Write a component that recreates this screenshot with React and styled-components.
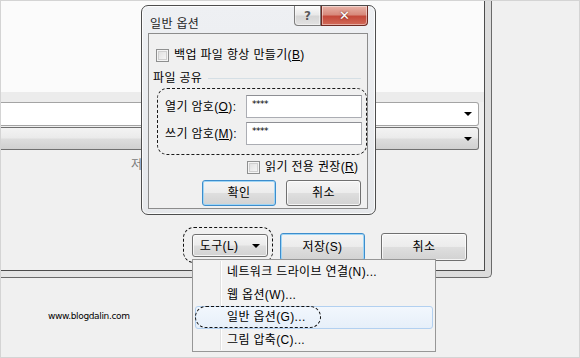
import React from 'react';
import styled, { createGlobalStyle } from 'styled-components';

const GlobalStyle = createGlobalStyle`
  html, body {
    margin: 0;
    padding: 0;
    background: #f0f0f0;
  }
  body {
    font-family: "Liberation Sans", "Noto Sans CJK KR", sans-serif;
    font-size: 12px;
    letter-spacing: 0.35px;
    color: #000;
  }
`;

const Screen = styled.div`
  position: relative;
  width: 580px;
  height: 358px;
  box-sizing: border-box;
  border: 1px solid #d4d4d4;
  background: #f0f0f0;
  overflow: hidden;
`;

/* background "save as" window */
const WindowFrame = styled.div`
  box-sizing: border-box;
  width: 491px;
  height: 277px;
  padding: 0 6px 6px 0;
  background: linear-gradient(90deg, #e6e6e6, #dcdcdc);
  border-right: 1px solid #6a6a6a;
  border-bottom: 1px solid #6a6a6a;
  border-bottom-right-radius: 5px;
`;

const WindowBody = styled.div`
  box-sizing: border-box;
  height: 270px;
  display: flex;
  flex-direction: column;
  background: #f0f0f0;
  border-right: 1px solid #4c4c4c;
  border-bottom: 1px solid #4c4c4c;
`;

const FileList = styled.div`
  height: 91px;
  background: #fbfbfb;
`;

const Strip = styled.div`
  height: 10px;
  background: #ececec;
`;

const Field = styled.div`
  box-sizing: border-box;
  height: ${p => p.$h}px;
  margin: ${p => p.$mt || 0}px 5px 0 0;
  display: flex;
  align-items: center;
  justify-content: flex-end;
  padding-right: 6px;
  border: 1px solid ${p => (p.$combo ? '#707070' : '#a4a4a4')};
  border-left: none;
  border-radius: 0 3px 3px 0;
  background: ${p => (p.$combo ? 'linear-gradient(#f3f3f3, #ebebeb 45%, #dcdcdc 55%, #d0d0d0)' : '#ffffff')};
`;

const DropArrow = styled.span`
  width: 0;
  height: 0;
  border-left: 4px solid transparent;
  border-right: 4px solid transparent;
  border-top: 4px solid #000;
`;

const MiddleArea = styled.div`
  height: 77px;
  box-sizing: border-box;
  padding: 7px 0 0 130px;
  color: #7a7a7a;
  line-height: 16px;
  white-space: nowrap;
`;

const ButtonBar = styled.div`
  display: flex;
  justify-content: flex-end;
  align-items: flex-start;
  padding-right: 17px;
`;

const FocusRing = styled.div`
  box-sizing: border-box;
  display: flex;
  padding: 6px 4px 0 8px;
  height: 36px;
  border: 1px dashed #111;
  border-radius: 11px;
  margin-right: 7px;
`;

const WinButton = styled.div`
  box-sizing: border-box;
  width: ${p => p.$w}px;
  height: ${p => p.$h}px;
  margin-top: ${p => p.$mt || 0}px;
  margin-left: ${p => p.$ml || 0}px;
  display: flex;
  align-items: center;
  justify-content: center;
  gap: 14px;
  border: 1px solid ${p => (p.$default ? '#3d8dcc' : '#707070')};
  border-radius: 3px;
  background: linear-gradient(#f4f4f4, #ececec 48%, #dedede 52%, #d2d2d2);
  box-shadow: inset 0 0 0 1px ${p => (p.$default ? '#9fd5f5' : 'rgba(255,255,255,0.75)')};
  line-height: 14px;
  color: #000;
  white-space: nowrap;
`;

const Watermark = styled.div`
  padding: 33px 0 0 47px;
  font-family: "DejaVu Sans", sans-serif;
  font-size: 9px;
  letter-spacing: -0.35px;
  color: #000;
  -webkit-font-smoothing: none;
`;

/* "일반 옵션" dialog */
const Dialog = styled.div`
  position: absolute;
  left: 140px;
  top: 4px;
  width: 235px;
  height: 210px;
  box-sizing: border-box;
  display: flex;
  flex-direction: column;
  background: linear-gradient(#eef0f3, #e6e8eb);
  border: 1px solid #4d4d4d;
  border-radius: 7px;
  box-shadow: inset 0 0 0 1px rgba(255,255,255,0.8);
`;

const TitleBar = styled.div`
  height: 27px;
  display: flex;
  align-items: flex-start;
  padding: 0 7px 0 8px;
`;

const Title = styled.div`
  flex: 1;
  padding-top: 11px;
  line-height: 14px;
  color: #1e1e1e;
`;

const CaptionButton = styled.div`
  box-sizing: border-box;
  width: ${p => p.$w}px;
  height: 20px;
  display: flex;
  align-items: center;
  justify-content: center;
  border: 1px solid ${p => (p.$close ? '#6f2a22' : '#7d7d7d')};
  border-top: none;
  border-radius: ${p => (p.$close ? '0 0 4px 0' : '0 0 0 4px')};
  background: ${p => (p.$close
    ? 'linear-gradient(#e8b3a8, #d88a7c 45%, #c4493a 55%, #d26a58)'
    : 'linear-gradient(#fbfbfb, #e9e9e9 45%, #d6d6d6 55%, #e2e2e2)')};
  box-shadow: inset 0 0 0 1px rgba(255,255,255,0.45);
  color: ${p => (p.$close ? '#fff' : '#5a5a5a')};
  font-family: "DejaVu Sans", sans-serif;
  font-weight: bold;
  font-size: ${p => (p.$close ? 13 : 12)}px;
  letter-spacing: 0;
  text-shadow: ${p => (p.$close ? '0 0 2px #5a1d16' : '0 0 1px #fff')};
`;

const Panel = styled.div`
  box-sizing: border-box;
  flex: 1;
  margin: 0 7px 5px 6px;
  padding: 14px 6px 0 7px;
  background: #f0f0f0;
  border: 1px solid #8c8c8c;
  display: flex;
  flex-direction: column;
`;

const CheckRow = styled.label`
  display: flex;
  align-items: center;
  gap: 5px;
  line-height: 14px;
  margin-left: ${p => p.$ml || 0}px;
  margin-top: ${p => p.$mt || 0}px;
  white-space: nowrap;
`;

const CheckBox = styled.span`
  box-sizing: border-box;
  width: 13px;
  height: 13px;
  border: 1px solid #8e8f8f;
  background: linear-gradient(135deg, #dcdcdc, #fafafa);
  box-shadow: inset 0 0 0 1px #f4f4f4, inset 0 0 0 2px #cfcfcf;
`;

const GroupTitle = styled.div`
  display: flex;
  align-items: center;
  gap: 6px;
  margin-top: 9px;
  margin-left: -3px;
  line-height: 14px;
  &::after {
    content: "";
    flex: 1;
    height: 1px;
    background: #d5dfe5;
  }
`;

const ShareBox = styled.div`
  box-sizing: border-box;
  width: 210px;
  height: 67px;
  margin-top: 3px;
  margin-left: 1px;
  padding: 6px 4px 0 7px;
  border: 1px dashed #1a1a1a;
  border-radius: 10px;
  display: flex;
  flex-direction: column;
  gap: 4px;
`;

const FieldRow = styled.div`
  display: flex;
  align-items: center;
  justify-content: space-between;
`;

const FieldLabel = styled.span`
  line-height: 14px;
  white-space: nowrap;
`;

const PasswordBox = styled.div`
  box-sizing: border-box;
  width: 116px;
  height: 23px;
  padding: 2px 0 0 5px;
  background: #fff;
  border: 1px solid #abadb3;
  border-top-color: #8e8f94;
  font-family: "DejaVu Sans", sans-serif;
  font-size: 9px;
  line-height: 12px;
  letter-spacing: -0.5px;
`;

const Underline = styled.u`
  text-decoration: underline;
`;

const DialogButtons = styled.div`
  display: flex;
  justify-content: flex-end;
  gap: 10px;
  margin-top: 6px;
`;

/* dropdown menu of 도구 */
const Menu = styled.div`
  position: absolute;
  left: 191px;
  top: 258px;
  width: 244px;
  height: 93px;
  box-sizing: border-box;
  padding: 1px 2px;
  background: #f2f2f2;
  border: 1px solid #979797;
  &::before {
    content: "";
    position: absolute;
    left: 27px;
    top: 1px;
    bottom: 1px;
    width: 1px;
    background: #e0e0e0;
    box-shadow: 1px 0 0 #fff;
  }
`;

const MenuItem = styled.div`
  position: relative;
  box-sizing: border-box;
  height: 22.6px;
  display: flex;
  align-items: center;
  padding-left: 31px;
  line-height: 14px;
  white-space: nowrap;
  border: 1px solid ${p => (p.$active ? '#b2d0f0' : 'transparent')};
  border-radius: 3px;
  background: ${p => (p.$active ? 'linear-gradient(#f2f7fd, #e6eff9)' : 'transparent')};
`;

const MenuFocus = styled.span`
  position: absolute;
  left: -1px;
  top: -1px;
  width: 126px;
  height: 22px;
  box-sizing: border-box;
  border: 1px dashed #111;
  border-radius: 11px;
`;

const menuItems = [
  { label: '네트워크 드라이브 연결(N)...' },
  { label: '웹 옵션(W)...' },
  { label: '일반 옵션(G)...', active: true },
  { label: '그림 압축(C)...' },
];

export default function App() {
  return (
    <Screen>
      <GlobalStyle />
      <WindowFrame>
        <WindowBody>
          <FileList />
          <Strip />
          <Field $h={24}>
            <DropArrow />
          </Field>
          <Field $h={23} $mt={1} $combo>
            <DropArrow />
          </Field>
          <MiddleArea>저장 위치:</MiddleArea>
          <ButtonBar>
            <FocusRing>
              <WinButton $w={76} $h={23}>
                <span>도구(L)</span>
                <DropArrow />
              </WinButton>
            </FocusRing>
            <WinButton $w={85} $h={28} $mt={6} $default>저장(S)</WinButton>
            <WinButton $w={86} $h={28} $mt={6} $ml={16}>취소</WinButton>
          </ButtonBar>
        </WindowBody>
      </WindowFrame>
      <Watermark>www.blogdalin.com</Watermark>

      <Dialog>
        <TitleBar>
          <Title>일반 옵션</Title>
          <CaptionButton $w={27}>?</CaptionButton>
          <CaptionButton $w={47} $close>✕</CaptionButton>
        </TitleBar>
        <Panel>
          <CheckRow>
            <CheckBox />
            <span>백업 파일 항상 만들기(<Underline>B</Underline>)</span>
          </CheckRow>
          <GroupTitle>파일 공유</GroupTitle>
          <ShareBox>
            <FieldRow>
              <FieldLabel>열기 암호(<Underline>O</Underline>):</FieldLabel>
              <PasswordBox>****</PasswordBox>
            </FieldRow>
            <FieldRow>
              <FieldLabel>쓰기 암호(<Underline>M</Underline>):</FieldLabel>
              <PasswordBox>****</PasswordBox>
            </FieldRow>
          </ShareBox>
          <CheckRow $ml={91} $mt={5}>
            <CheckBox />
            <span>읽기 전용 권장(<Underline>R</Underline>)</span>
          </CheckRow>
          <DialogButtons>
            <WinButton $w={74} $h={26} $default>확인</WinButton>
            <WinButton $w={75} $h={26}>취소</WinButton>
          </DialogButtons>
        </Panel>
      </Dialog>

      <Menu>
        {menuItems.map(item => (
          <MenuItem key={item.label} $active={item.active}>
            {item.active && <MenuFocus />}
            {item.label}
          </MenuItem>
        ))}
      </Menu>
    </Screen>
  );
}
